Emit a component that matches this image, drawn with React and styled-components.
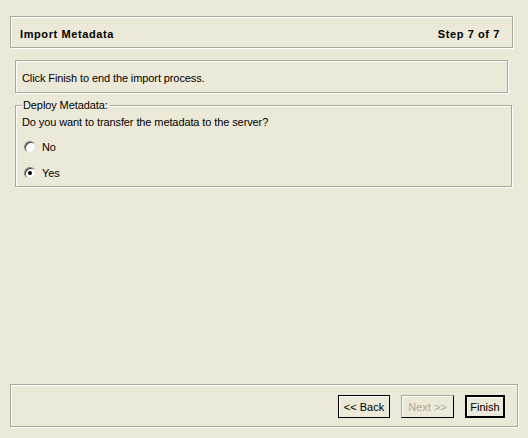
import React from "react";
import styled, { createGlobalStyle } from "styled-components";

const Global = createGlobalStyle`
  html, body {
    margin: 0;
    padding: 0;
    background: #ece9d8;
  }
  body {
    font-family: "Liberation Sans", Arial, sans-serif;
    font-size: 11px;
    color: #000;
  }
`;

const Page = styled.div`
  width: 528px;
  height: 438px;
  box-sizing: border-box;
  padding: 16px 0 0 10px;
  display: flex;
  flex-direction: column;
`;

const Etched = styled.div`
  box-sizing: border-box;
  border: 1px solid #aca899;
  box-shadow: inset 1px 1px 0 #fff, 1px 1px 0 #fff;
`;

const Header = styled(Etched)`
  width: 503px;
  height: 32px;
  display: flex;
  align-items: center;
  justify-content: space-between;
  padding: 4px 12px 0 9px;
  font-weight: bold;
  letter-spacing: 0.6px;
`;

const Body = styled.div`
  flex: 1;
  display: flex;
  flex-direction: column;
  padding: 12px 0 0 5px;
`;

const Info = styled(Etched)`
  width: 493px;
  height: 33px;
  display: flex;
  align-items: center;
  padding: 3px 0 0 6px;
  letter-spacing: -0.1px;
`;

const Group = styled.fieldset`
  box-sizing: border-box;
  width: 497px;
  height: 88px;
  margin: 6px 0 0 0;
  padding: 0 0 0 6px;
  border: 1px solid #aca899;
  box-shadow: inset 1px 1px 0 #fff, 1px 1px 0 #fff;
  min-width: 0;
  letter-spacing: -0.1px;
`;

const Legend = styled.legend`
  padding: 0 2px 0 1px;
  margin-left: 0;
  line-height: 13px;
`;

const Question = styled.div`
  margin-top: 4px;
  line-height: 13px;
`;

const Option = styled.label`
  display: flex;
  align-items: center;
  gap: 6px;
  height: 13px;
  margin-top: ${(p) => p.$gap}px;
  padding-left: 2px;
`;

const Radio = styled.span`
  position: relative;
  box-sizing: border-box;
  width: 12px;
  height: 12px;
  border-radius: 50%;
  background: #fff;
  border: 1px solid;
  border-color: #808080 #e2e0d6 #e2e0d6 #808080;
  box-shadow: inset 1px 1px 0 #404040;

  &::after {
    content: "";
    display: ${(p) => (p.$checked ? "block" : "none")};
    position: absolute;
    left: 3px;
    top: 3px;
    width: 4px;
    height: 4px;
    border-radius: 50%;
    background: #000;
  }
`;

const Footer = styled(Etched)`
  width: 508px;
  height: 43px;
  margin-bottom: 11px;
  display: flex;
  align-items: center;
  justify-content: flex-end;
  gap: 11px;
  padding: 2px 12px 0 0;
`;

const Button = styled.button`
  box-sizing: border-box;
  height: 23px;
  width: ${(p) => p.$w}px;
  margin: 0;
  padding: 0;
  font-family: inherit;
  font-size: 11px;
  background: #ece9d8;
  color: ${(p) => (p.disabled ? "#aca899" : "#000")};
  border: ${(p) => (p.$default ? "2px solid #000" : "1px solid #000")};
  border-color: ${(p) =>
    p.disabled ? "#aca899 #000 #000 #aca899" : "#000"};
  box-shadow: inset 1px 1px 0 #fff;
`;

export default function App() {
  return (
    <>
      <Global />
      <Page>
        <Header>
          <span>Import Metadata</span>
          <span>Step 7 of 7</span>
        </Header>
        <Body>
          <Info>Click Finish to end the import process.</Info>
          <Group>
            <Legend>Deploy Metadata:</Legend>
            <Question>Do you want to transfer the metadata to the server?</Question>
            <Option $gap={11}>
              <Radio />
              No
            </Option>
            <Option $gap={13}>
              <Radio $checked />
              Yes
            </Option>
          </Group>
        </Body>
        <Footer>
          <Button $w={52}>&lt;&lt; Back</Button>
          <Button $w={53} disabled>
            Next &gt;&gt;
          </Button>
          <Button $w={40} $default>
            Finish
          </Button>
        </Footer>
      </Page>
    </>
  );
}
